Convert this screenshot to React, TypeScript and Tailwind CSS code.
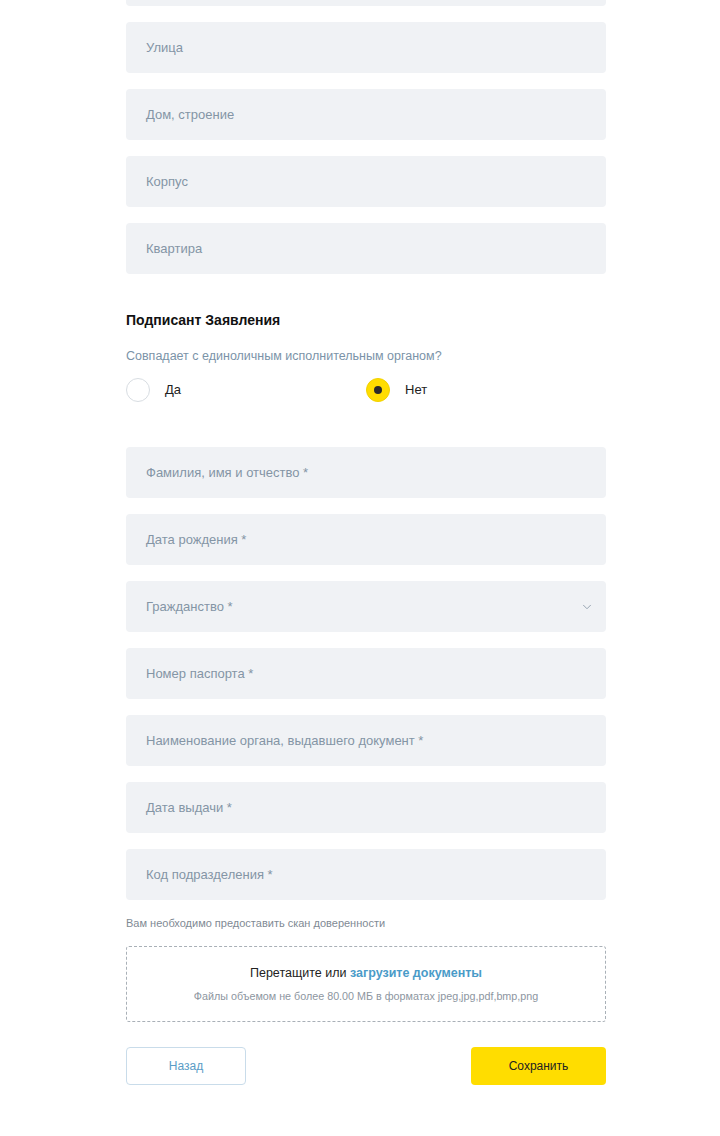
import { ChevronDown } from "lucide-react";

const address = ["Улица", "Дом, строение", "Корпус", "Квартира"];

const person = [
  "Фамилия, имя и отчество *",
  "Дата рождения *",
  "Гражданство *",
  "Номер паспорта *",
  "Наименование органа, выдавшего документ *",
  "Дата выдачи *",
  "Код подразделения *",
];

function Field({ label, select }: { label: string; select?: boolean }) {
  return (
    <div className="h-[51px] rounded-[4px] bg-[#f0f2f5] pl-5 pr-3 flex items-center justify-between">
      <span className="text-[13px] text-[#8495a5]">{label}</span>
      {select && <ChevronDown className="w-3.5 h-3.5 text-[#8a99a8]" strokeWidth={1.5} />}
    </div>
  );
}

function Radio({ label, checked }: { label: string; checked?: boolean }) {
  return (
    <label className="flex items-center gap-[15px] cursor-pointer">
      {checked ? (
        <span className="w-6 h-6 rounded-full bg-[#ffdd00] border border-[#f2d200] flex items-center justify-center">
          <span className="w-2 h-2 rounded-full bg-[#2b2b2b]" />
        </span>
      ) : (
        <span className="w-6 h-6 rounded-full border border-[#d8dde2] bg-white" />
      )}
      <span className="text-[13px] text-[#222]">{label}</span>
    </label>
  );
}

export default function App() {
  return (
    <div
      className="w-[720px] h-[1136px] bg-white overflow-hidden"
      style={{ fontFamily: "'Liberation Sans', Arial, sans-serif" }}
    >
      <div className="ml-[126px] w-[480px]">
        <div className="flex flex-col gap-4 -mt-[45px]">
          <Field label="" />
          {address.map((a) => (
            <Field key={a} label={a} />
          ))}
        </div>

        <h2 className="mt-[36px] text-[14px] font-semibold text-[#111] leading-5">
          Подписант Заявления
        </h2>
        <p className="mt-[18px] text-[12.5px] text-[#7b93a8] leading-4">
          Совпадает с единоличным исполнительным органом?
        </p>
        <div className="mt-[14px] grid grid-cols-2">
          <Radio label="Да" />
          <Radio label="Нет" checked />
        </div>

        <div className="flex flex-col gap-4 mt-[45px]">
          {person.map((p) => (
            <Field key={p} label={p} select={p === "Гражданство *"} />
          ))}
        </div>

        <p className="mt-[15px] text-[11px] text-[#7f8a94] leading-4">
          Вам необходимо предоставить скан доверенности
        </p>

        <div className="mt-[15px] h-[76px] border border-dashed border-[#a9b0b7] rounded-[3px] flex flex-col items-center justify-center gap-[5px]">
          <div className="text-[12.5px] text-[#222]">
            Перетащите или{" "}
            <span className="font-bold text-[#4a9bc8] cursor-pointer">загрузите документы</span>
          </div>
          <div className="text-[10.75px] text-[#8d969f]">
            Файлы объемом не более 80.00 МБ в форматах jpeg,jpg,pdf,bmp,png
          </div>
        </div>

        <div className="mt-[25px] flex justify-between">
          <button className="w-[120px] h-[38px] rounded-[4px] border border-[#c9dcea] bg-white text-[12px] text-[#5a9cc6]">
            Назад
          </button>
          <button className="w-[135px] h-[38px] rounded-[4px] bg-[#ffdd00] text-[12px] text-[#222]">
            Сохранить
          </button>
        </div>
      </div>
    </div>
  );
}
